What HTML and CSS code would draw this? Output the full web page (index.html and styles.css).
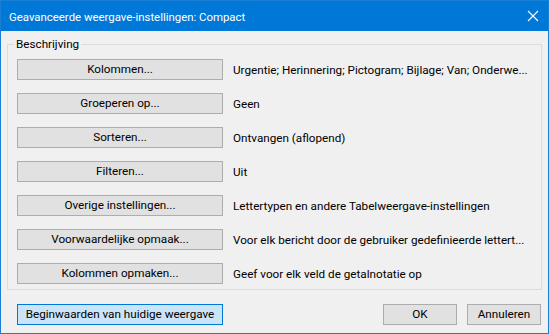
FILE: index.html
```html
<!DOCTYPE html>
<html lang="nl">
<head>
  <meta charset="UTF-8">
  <title>Geavanceerde weergave-instellingen: Compact</title>
  <link rel="stylesheet" href="styles.css">
</head>
<body>

  <div class="dialog">
    <div class="titlebar">
      <span class="title">Geavanceerde weergave-instellingen: Compact</span>
      <svg class="close" width="12" height="12" viewBox="0 0 12 12">
        <path d="M1 1 L11 11 M11 1 L1 11" stroke="#fff" stroke-width="1.1" fill="none"/>
      </svg>
    </div>

    <div class="content">
      <fieldset class="group">
        <legend>Beschrijving</legend>

        <div class="row">
          <button class="btn">Kolommen...</button>
          <span class="desc">Urgentie; Herinnering; Pictogram; Bijlage; Van; Onderwe...</span>
        </div>
        <div class="row">
          <button class="btn">Groeperen op...</button>
          <span class="desc">Geen</span>
        </div>
        <div class="row">
          <button class="btn">Sorteren...</button>
          <span class="desc">Ontvangen (aflopend)</span>
        </div>
        <div class="row">
          <button class="btn">Filteren...</button>
          <span class="desc">Uit</span>
        </div>
        <div class="row">
          <button class="btn">Overige instellingen...</button>
          <span class="desc">Lettertypen en andere Tabelweergave-instellingen</span>
        </div>
        <div class="row">
          <button class="btn">Voorwaardelijke opmaak...</button>
          <span class="desc">Voor elk bericht door de gebruiker gedefinieerde lettert...</span>
        </div>
        <div class="row">
          <button class="btn">Kolommen opmaken...</button>
          <span class="desc">Geef voor elk veld de getalnotatie op</span>
        </div>
      </fieldset>

      <div class="footer">
        <button class="btn btn-default">Beginwaarden van huidige weergave</button>
        <div class="footer-right">
          <button class="btn btn-small">OK</button>
          <button class="btn btn-small">Annuleren</button>
        </div>
      </div>
    </div>
  </div>

</body>
</html>
```
FILE: styles.css
```css
* {
  box-sizing: border-box;
  margin: 0;
  padding: 0;
}

body {
  font-family: Roboto, "Liberation Sans", sans-serif;
  font-size: 11.7px;
  color: #000;
  background-color: #f0f0f0;
}

.dialog {
  width: 549px;
  height: 334px;
  border: 1px solid #1a7fd4;
  background-color: #f0f0f0;
  display: flex;
  flex-direction: column;
}

.titlebar {
  height: 30px;
  background-color: #0078d7;
  color: #fff;
  display: flex;
  align-items: center;
  justify-content: space-between;
  padding: 0 8px 0 8px;
}

.title {
  font-size: 11.4px;
  padding-top: 1px;
}

.close {
  margin-right: 1px;
}

.content {
  flex: 1;
  display: flex;
  flex-direction: column;
}

.group {
  margin: 5px 6px 0;
  padding: 7px 6px 5px;
  border: 1px solid #dcdcdc;
  display: flex;
  flex-direction: column;
  gap: 13px;
}

.group legend {
  padding: 0 2px;
  height: 16px;
  line-height: 16px;
}

.row {
  display: flex;
  align-items: center;
  gap: 10px;
  padding-left: 3px;
}

.btn {
  font-family: inherit;
  font-size: inherit;
  color: #000;
  height: 21px;
  background-color: #e1e1e1;
  border: 1px solid #adadad;
  text-align: center;
  line-height: 19px;
}

.row .btn {
  width: 206px;
  flex-shrink: 0;
}

.desc {
  white-space: nowrap;
}

.footer {
  display: flex;
  justify-content: space-between;
  align-items: center;
  padding: 14px 7px 0 16px;
}

.btn-default {
  width: 206px;
  background-color: #cce4f7;
  border-color: #0078d7;
}

.footer-right {
  display: flex;
  gap: 10px;
}

.btn-small {
  width: 74px;
}
```
